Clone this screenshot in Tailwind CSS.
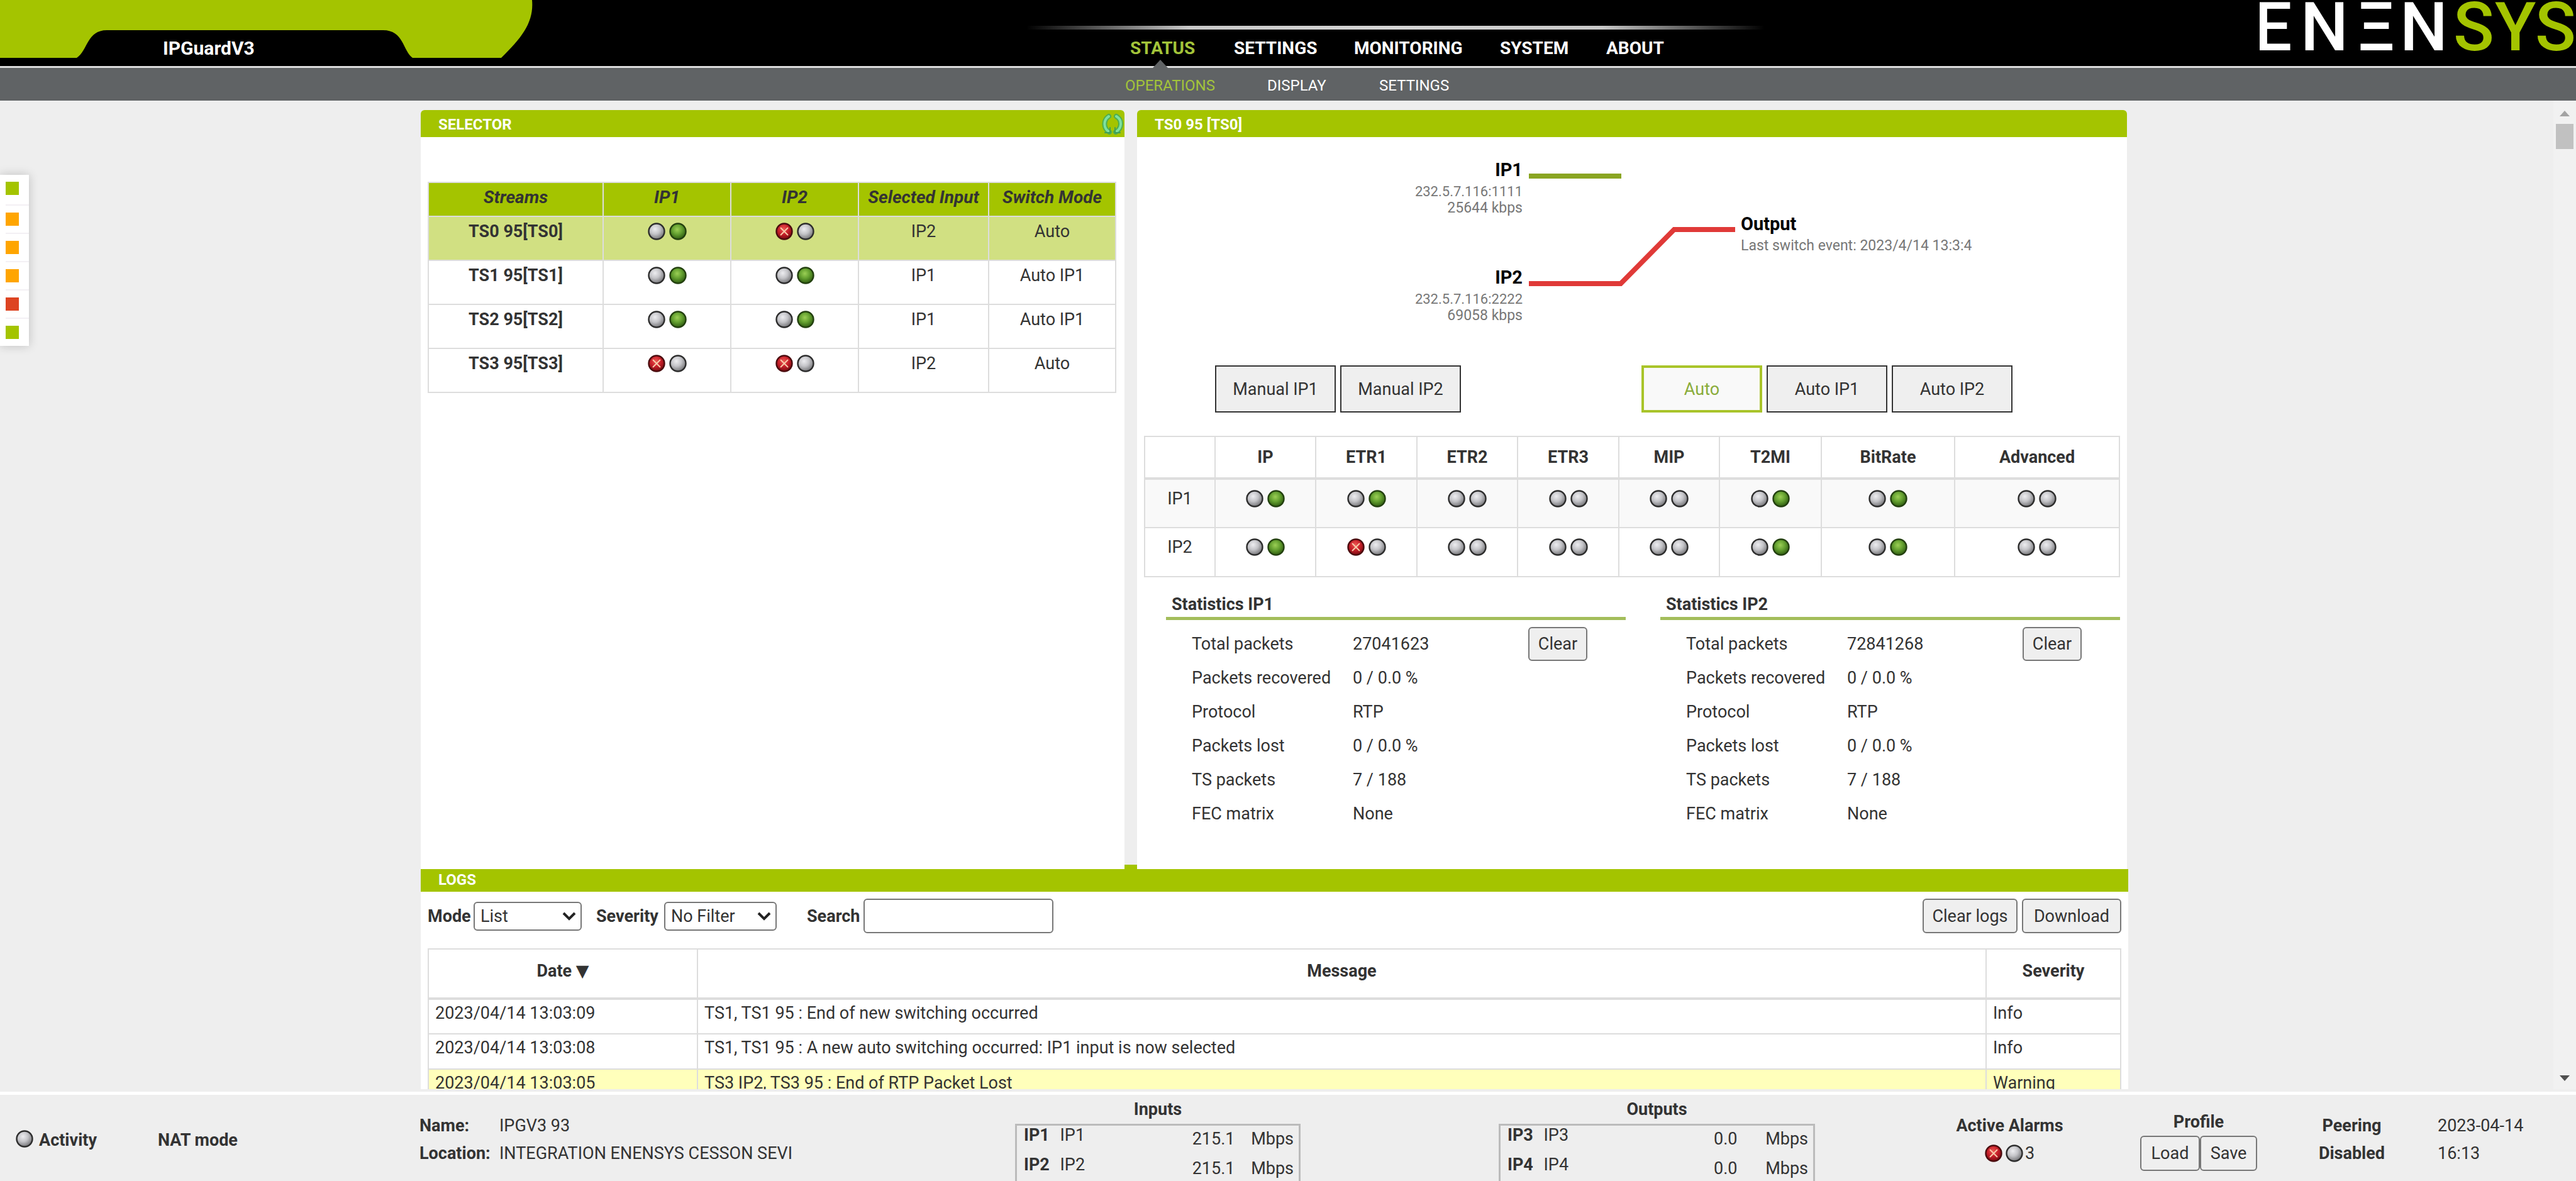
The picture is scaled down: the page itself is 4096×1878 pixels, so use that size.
<!DOCTYPE html>
<html lang="en">
<head>
    <meta charset="UTF-8">
    <meta name="viewport" content="width=device-width, initial-scale=1.0">
    <title>IPGuardV3 - Operations</title>
    <script src="https://cdn.jsdelivr.net/npm/@tailwindcss/browser@4"></script>
</head>
<body class="h-screen flex flex-col overflow-hidden bg-[#eeeeee] font-['Roboto','Liberation_Sans',sans-serif] text-[27px] leading-[36px] text-[#333333]">

    <!-- Shared lamp symbols -->
    <svg class="absolute w-0 h-0" aria-hidden="true">
        <defs>
            <radialGradient id="grayFill" cx="40%" cy="35%" r="65%">
                <stop offset="0" stop-color="#ededf0" />
                <stop offset="0.5" stop-color="#c4c4c8" />
                <stop offset="1" stop-color="#77777a" />
            </radialGradient>
            <radialGradient id="greenFill" cx="45%" cy="38%" r="62%">
                <stop offset="0" stop-color="#9bcf55" />
                <stop offset="0.5" stop-color="#64a030" />
                <stop offset="1" stop-color="#2f5c10" />
            </radialGradient>
            <radialGradient id="redFill" cx="45%" cy="35%" r="65%">
                <stop offset="0" stop-color="#ee5a55" />
                <stop offset="0.5" stop-color="#c8202a" />
                <stop offset="1" stop-color="#7a0a10" />
            </radialGradient>
            <symbol id="gray" viewBox="0 0 28 28">
                <circle cx="14" cy="14" r="12.5" fill="url(#grayFill)" stroke="#2c2c2c" stroke-width="2.4" />
            </symbol>
            <symbol id="green" viewBox="0 0 28 28">
                <circle cx="14" cy="14" r="12.5" fill="url(#greenFill)" stroke="#23400f" stroke-width="2.4" />
            </symbol>
            <symbol id="red" viewBox="0 0 28 28">
                <circle cx="14" cy="14" r="12.5" fill="url(#redFill)" stroke="#4a0b0e" stroke-width="2.4" />
                <path d="M8 8L20 20M20 8L8 20" stroke="#f7c9a8" stroke-width="2" />
            </symbol>
        </defs>
    </svg>

    <!-- Header -->
    <header class="relative h-[105px] shrink-0 bg-black flex">
        <div class="relative w-[847px] h-[92px] shrink-0">
            <svg class="absolute inset-0 w-full h-full" viewBox="0 0 847 92" aria-hidden="true">
                <path fill="#a4c400" d="M0 0H846C849 34 832 58 797 92H656C640 80 642 48 609 48H170C138 48 140 80 122 92H0Z" />
            </svg>
            <h1 class="relative pl-[259px] pt-[59px] text-[30px] font-bold text-white">IPGuardV3</h1>
        </div>
        <div class="absolute left-[1632px] top-[41px] w-[1174px] h-[6px] bg-[linear-gradient(90deg,transparent,#c8c8c8_22%,#d5d5d5_50%,#c8c8c8_78%,transparent)]"></div>
        <nav class="pl-[950px] pt-[59px] flex gap-[63px] text-[28px] font-bold text-white">
            <a href="#" class="relative w-[102px] text-[#a3c43a]">STATUS
                <svg class="absolute left-[36px] top-[36px] w-[24px] h-[13px]" viewBox="0 0 24 13" aria-hidden="true"><path d="M12 0L24 13H0Z" fill="#606365" /></svg>
            </a>
            <a href="#" class="w-[128px]">SETTINGS</a>
            <a href="#" class="w-[169px]">MONITORING</a>
            <a href="#" class="w-[106px]">SYSTEM</a>
            <a href="#">ABOUT</a>
        </nav>
        <svg class="ml-auto w-[503px] h-[105px]" viewBox="0 0 503 105" role="img" aria-label="ENENSYS">
            <text y="80" x="-9 65 155 223 308 374 438" font-family="Roboto" font-size="107" font-weight="500" fill="#ffffff">ENΞN<tspan fill="#a4c400">SYS</tspan></text>
        </svg>
    </header>
    <nav class="h-[55px] shrink-0 bg-[#606365] border-t-[3px] border-[#dddddd] pl-[1789px] pt-[10px] flex gap-[84px] text-[24px] text-white">
        <a href="#" class="w-[142px] text-[#a3c43a]">OPERATIONS</a>
        <a href="#" class="w-[94px]">DISPLAY</a>
        <a href="#">SETTINGS</a>
    </nav>

    <div class="flex-1 min-h-0 flex overflow-hidden pb-1">
        <main class="flex-1 min-w-0 overflow-hidden pl-[669px] pr-[676px] pt-[15px]">
            <div class="flex">
                <!-- Selector -->
                <section class="flex-1 bg-white rounded-t-md">
                    <div class="h-[43px] flex justify-between bg-[#a4c400] rounded-t-md pl-[28px]">
                        <h2 class="text-[24px] leading-[46px] font-bold text-white">SELECTOR</h2>
                        <button type="button" aria-label="Refresh" class="pr-[2px]">
                            <svg class="w-[34px] h-[36px]" viewBox="0 0 34 36" fill="none" stroke-linecap="round">
                                <path d="M11 6C2 12 2 25 12 31M23 6C33 12 32 25 22 31" stroke="#4fae4f" stroke-width="8" />
                                <path d="M11 6C2 12 2 25 12 31M23 6C33 12 32 25 22 31" stroke="#7fe0a0" stroke-width="4" />
                                <path d="M13 24V32H5M21 24V32H29" stroke="#3f9f55" stroke-width="2" />
                            </svg>
                        </button>
                    </div>
                    <table class="w-[1095px] ml-[11px] mt-[71px] table-fixed border-collapse text-center [&_td]:border-2 [&_td]:border-[#dddddd] [&_td]:pt-[5px] [&_td]:align-top [&_th]:border-2 [&_th]:border-[#dddddd] [&_tr]:h-[70px]">
                        <colgroup><col class="w-[278px]"><col class="w-[203px]"><col class="w-[203px]"><col class="w-[207px]"><col></colgroup>
                        <thead class="bg-[#a4c400] italic text-[28px]">
                            <tr class="!h-[54px]">
                                <th class="pb-[6px]">Streams</th><th class="pb-[6px]">IP1</th><th class="pb-[6px]">IP2</th><th class="pb-[6px]">Selected Input</th><th class="pb-[6px]">Switch Mode</th>
                            </tr>
                        </thead>
                        <tbody>
                            <tr class="bg-[#d1e082]">
                                <td class="font-bold">TS0 95[TS0]</td>
                                <td><div class="flex justify-center gap-[6px] pt-1"><svg class="size-[28px]"><use href="#gray" /></svg><svg class="size-[28px]"><use href="#green" /></svg></div></td>
                                <td><div class="flex justify-center gap-[6px] pt-1"><svg class="size-[28px]"><use href="#red" /></svg><svg class="size-[28px]"><use href="#gray" /></svg></div></td>
                                <td>IP2</td>
                                <td>Auto</td>
                            </tr>
                            <tr>
                                <td class="font-bold">TS1 95[TS1]</td>
                                <td><div class="flex justify-center gap-[6px] pt-1"><svg class="size-[28px]"><use href="#gray" /></svg><svg class="size-[28px]"><use href="#green" /></svg></div></td>
                                <td><div class="flex justify-center gap-[6px] pt-1"><svg class="size-[28px]"><use href="#gray" /></svg><svg class="size-[28px]"><use href="#green" /></svg></div></td>
                                <td>IP1</td>
                                <td>Auto IP1</td>
                            </tr>
                            <tr>
                                <td class="font-bold">TS2 95[TS2]</td>
                                <td><div class="flex justify-center gap-[6px] pt-1"><svg class="size-[28px]"><use href="#gray" /></svg><svg class="size-[28px]"><use href="#green" /></svg></div></td>
                                <td><div class="flex justify-center gap-[6px] pt-1"><svg class="size-[28px]"><use href="#gray" /></svg><svg class="size-[28px]"><use href="#green" /></svg></div></td>
                                <td>IP1</td>
                                <td>Auto IP1</td>
                            </tr>
                            <tr>
                                <td class="font-bold">TS3 95[TS3]</td>
                                <td><div class="flex justify-center gap-[6px] pt-1"><svg class="size-[28px]"><use href="#red" /></svg><svg class="size-[28px]"><use href="#gray" /></svg></div></td>
                                <td><div class="flex justify-center gap-[6px] pt-1"><svg class="size-[28px]"><use href="#red" /></svg><svg class="size-[28px]"><use href="#gray" /></svg></div></td>
                                <td>IP2</td>
                                <td>Auto</td>
                            </tr>
                        </tbody>
                    </table>
                </section>

                <div class="w-[20px] h-[7px] self-end bg-[#a4c400]"></div>

                <!-- Stream detail -->
                <section class="w-[1574px] mr-[2px] bg-white rounded-t-md pb-[61px]">
                    <h2 class="h-[43px] bg-[#a4c400] rounded-t-md pl-[28px] text-[24px] leading-[46px] font-bold text-white">TS0 95 [TS0]</h2>

                    <svg class="block w-full h-[363px]" viewBox="0 0 1574 363" fill="none" font-size="23">
                        <path d="M623 62H770" stroke="#8aa522" stroke-width="8" />
                        <path d="M623 233H769L854 147H951" stroke="#e03a38" stroke-width="8" />
                        <g font-size="29" font-weight="bold" fill="#000000">
                            <text x="613" y="62" text-anchor="end">IP1</text>
                            <text x="613" y="233" text-anchor="end">IP2</text>
                            <text x="960" y="148">Output</text>
                        </g>
                        <g fill="#777777">
                            <text x="613" y="94" text-anchor="end" font-size="22">232.5.7.116:1111</text>
                            <text x="613" y="120" text-anchor="end">25644 kbps</text>
                            <text x="613" y="265" text-anchor="end" font-size="22">232.5.7.116:2222</text>
                            <text x="613" y="291" text-anchor="end">69058 kbps</text>
                            <text x="960" y="180">Last switch event: 2023/4/14 13:3:4</text>
                        </g>
                    </svg>

                    <div class="flex justify-between pl-[124px] pr-[182px]">
                        <div class="flex gap-[7px]">
                            <button type="button" class="w-[192px] h-[75px] border-2 border-[#333333] bg-[#efefef]">Manual IP1</button>
                            <button type="button" class="w-[192px] h-[75px] border-2 border-[#333333] bg-[#efefef]">Manual IP2</button>
                        </div>
                        <div class="flex gap-[7px]">
                            <button type="button" class="w-[192px] h-[75px] border-4 border-[#a9c42a] bg-[#f9f9f9] text-[#8aac3b]">Auto</button>
                            <button type="button" class="w-[192px] h-[75px] border-2 border-[#333333] bg-[#efefef]">Auto IP1</button>
                            <button type="button" class="w-[192px] h-[75px] border-2 border-[#333333] bg-[#efefef]">Auto IP2</button>
                        </div>
                    </div>

                    <table class="w-[1552px] mx-auto mt-[37px] table-fixed border-collapse text-center [&_td]:border-2 [&_td]:border-[#dddddd] [&_td]:pt-[12px] [&_td]:align-top [&_th]:border-2 [&_th]:border-b-4 [&_th]:border-[#dddddd] [&_tr]:h-[78px]">
                        <colgroup><col class="w-[112px]"><col class="w-[160px]"><col class="w-[161px]"><col class="w-[160px]"><col class="w-[161px]"><col class="w-[160px]"><col class="w-[162px]"><col class="w-[212px]"><col></colgroup>
                        <thead>
                            <tr class="!h-[67px]">
                                <th></th><th>IP</th><th>ETR1</th><th>ETR2</th><th>ETR3</th><th>MIP</th><th>T2MI</th><th>BitRate</th><th>Advanced</th>
                            </tr>
                        </thead>
                        <tbody>
                            <tr class="bg-[#f9f9f9]">
                                <td>IP1</td>
                                <td><div class="flex justify-center gap-[6px] pt-1"><svg class="size-[28px]"><use href="#gray" /></svg><svg class="size-[28px]"><use href="#green" /></svg></div></td>
                                <td><div class="flex justify-center gap-[6px] pt-1"><svg class="size-[28px]"><use href="#gray" /></svg><svg class="size-[28px]"><use href="#green" /></svg></div></td>
                                <td><div class="flex justify-center gap-[6px] pt-1"><svg class="size-[28px]"><use href="#gray" /></svg><svg class="size-[28px]"><use href="#gray" /></svg></div></td>
                                <td><div class="flex justify-center gap-[6px] pt-1"><svg class="size-[28px]"><use href="#gray" /></svg><svg class="size-[28px]"><use href="#gray" /></svg></div></td>
                                <td><div class="flex justify-center gap-[6px] pt-1"><svg class="size-[28px]"><use href="#gray" /></svg><svg class="size-[28px]"><use href="#gray" /></svg></div></td>
                                <td><div class="flex justify-center gap-[6px] pt-1"><svg class="size-[28px]"><use href="#gray" /></svg><svg class="size-[28px]"><use href="#green" /></svg></div></td>
                                <td><div class="flex justify-center gap-[6px] pt-1"><svg class="size-[28px]"><use href="#gray" /></svg><svg class="size-[28px]"><use href="#green" /></svg></div></td>
                                <td><div class="flex justify-center gap-[6px] pt-1"><svg class="size-[28px]"><use href="#gray" /></svg><svg class="size-[28px]"><use href="#gray" /></svg></div></td>
                            </tr>
                            <tr>
                                <td>IP2</td>
                                <td><div class="flex justify-center gap-[6px] pt-1"><svg class="size-[28px]"><use href="#gray" /></svg><svg class="size-[28px]"><use href="#green" /></svg></div></td>
                                <td><div class="flex justify-center gap-[6px] pt-1"><svg class="size-[28px]"><use href="#red" /></svg><svg class="size-[28px]"><use href="#gray" /></svg></div></td>
                                <td><div class="flex justify-center gap-[6px] pt-1"><svg class="size-[28px]"><use href="#gray" /></svg><svg class="size-[28px]"><use href="#gray" /></svg></div></td>
                                <td><div class="flex justify-center gap-[6px] pt-1"><svg class="size-[28px]"><use href="#gray" /></svg><svg class="size-[28px]"><use href="#gray" /></svg></div></td>
                                <td><div class="flex justify-center gap-[6px] pt-1"><svg class="size-[28px]"><use href="#gray" /></svg><svg class="size-[28px]"><use href="#gray" /></svg></div></td>
                                <td><div class="flex justify-center gap-[6px] pt-1"><svg class="size-[28px]"><use href="#gray" /></svg><svg class="size-[28px]"><use href="#green" /></svg></div></td>
                                <td><div class="flex justify-center gap-[6px] pt-1"><svg class="size-[28px]"><use href="#gray" /></svg><svg class="size-[28px]"><use href="#green" /></svg></div></td>
                                <td><div class="flex justify-center gap-[6px] pt-1"><svg class="size-[28px]"><use href="#gray" /></svg><svg class="size-[28px]"><use href="#gray" /></svg></div></td>
                            </tr>
                        </tbody>
                    </table>

                    <div class="flex gap-[55px] pl-[46px] pr-[11px] pt-[22px]">
                        <div class="flex-1">
                            <h3 class="h-[46px] pl-[9px] leading-[42px] font-bold border-b-[5px] border-[#a3bd5b]">Statistics IP1</h3>
                            <table class="w-full mt-[11px] table-fixed [&_tr]:h-[54px] [&_td]:h-[54px]">
                                <colgroup><col class="w-[297px]"><col class="w-[279px]"><col></colgroup>
                                <tr><td class="pl-[41px]">Total packets</td><td>27041623</td><td><button type="button" class="block w-[94px] h-[54px] border-2 border-[#777777] rounded-md bg-[#efefef]">Clear</button></td></tr>
                                <tr><td class="pl-[41px] whitespace-nowrap">Packets recovered</td><td>0 / 0.0 %</td><td></td></tr>
                                <tr><td class="pl-[41px]">Protocol</td><td>RTP</td><td></td></tr>
                                <tr><td class="pl-[41px]">Packets lost</td><td>0 / 0.0 %</td><td></td></tr>
                                <tr><td class="pl-[41px]">TS packets</td><td>7 / 188</td><td></td></tr>
                                <tr><td class="pl-[41px]">FEC matrix</td><td>None</td><td></td></tr>
                            </table>
                        </div>
                        <div class="flex-1">
                            <h3 class="h-[46px] pl-[9px] leading-[42px] font-bold border-b-[5px] border-[#a3bd5b]">Statistics IP2</h3>
                            <table class="w-full mt-[11px] table-fixed [&_tr]:h-[54px] [&_td]:h-[54px]">
                                <colgroup><col class="w-[297px]"><col class="w-[279px]"><col></colgroup>
                                <tr><td class="pl-[41px]">Total packets</td><td>72841268</td><td><button type="button" class="block w-[94px] h-[54px] border-2 border-[#777777] rounded-md bg-[#efefef]">Clear</button></td></tr>
                                <tr><td class="pl-[41px] whitespace-nowrap">Packets recovered</td><td>0 / 0.0 %</td><td></td></tr>
                                <tr><td class="pl-[41px]">Protocol</td><td>RTP</td><td></td></tr>
                                <tr><td class="pl-[41px]">Packets lost</td><td>0 / 0.0 %</td><td></td></tr>
                                <tr><td class="pl-[41px]">TS packets</td><td>7 / 188</td><td></td></tr>
                                <tr><td class="pl-[41px]">FEC matrix</td><td>None</td><td></td></tr>
                            </table>
                        </div>
                    </div>
                </section>
            </div>

            <!-- Logs -->
            <section class="bg-white">
                <h2 class="h-[36px] bg-[#a4c400] pl-[28px] text-[24px] leading-[34px] font-bold text-white">LOGS</h2>
                <div class="h-[90px] pt-[11px] px-[11px] flex items-start">
                    <div class="h-[55px] flex items-center">
                        <label for="mode" class="w-[73px] font-bold">Mode</label>
                        <div class="relative">
                            <select id="mode" class="block w-[172px] h-[46px] appearance-none border-2 border-[#777777] rounded-md bg-white pl-[9px]">
                                <option>List</option>
                            </select>
                            <svg class="absolute right-[9px] top-[16px] w-[22px] h-[14px]" viewBox="0 0 22 14" fill="none" stroke="#222222" stroke-width="4" aria-hidden="true"><path d="M2 2L11 11L20 2" /></svg>
                        </div>
                        <label for="severity" class="ml-[23px] w-[108px] font-bold">Severity</label>
                        <div class="relative">
                            <select id="severity" class="block w-[179px] h-[46px] appearance-none border-2 border-[#777777] rounded-md bg-white pl-[9px]">
                                <option>No Filter</option>
                            </select>
                            <svg class="absolute right-[9px] top-[16px] w-[22px] h-[14px]" viewBox="0 0 22 14" fill="none" stroke="#222222" stroke-width="4" aria-hidden="true"><path d="M2 2L11 11L20 2" /></svg>
                        </div>
                        <label for="search" class="ml-[48px] w-[90px] font-bold">Search</label>
                        <input id="search" type="text" class="w-[302px] h-[55px] border-2 border-[#777777] rounded-md bg-white px-2">
                    </div>
                    <div class="ml-auto flex gap-[7px]">
                        <button type="button" class="w-[151px] h-[55px] border-2 border-[#777777] rounded-md bg-[#efefef]">Clear logs</button>
                        <button type="button" class="w-[158px] h-[55px] border-2 border-[#777777] rounded-md bg-[#efefef]">Download</button>
                    </div>
                </div>
                <div class="px-[11px]">
                    <table class="w-full table-fixed border-collapse [&_td]:border-2 [&_td]:border-[#dddddd] [&_td]:pl-[10px] [&_td]:pb-[12px] [&_th]:border-2 [&_th]:border-b-4 [&_th]:border-[#dddddd] [&_th]:pb-[8px] [&_tr]:h-[56px]">
                        <colgroup><col class="w-[428px]"><col><col class="w-[214px]"></colgroup>
                        <thead>
                            <tr class="!h-[79px]"><th>Date <span class="font-['DejaVu_Sans']">▼</span></th><th>Message</th><th>Severity</th></tr>
                        </thead>
                        <tbody>
                            <tr><td>2023/04/14 13:03:09</td><td>TS1, TS1 95 : End of new switching occurred</td><td>Info</td></tr>
                            <tr><td>2023/04/14 13:03:08</td><td>TS1, TS1 95 : A new auto switching occurred: IP1 input is now selected</td><td>Info</td></tr>
                            <tr class="bg-[#ffffbb]"><td>2023/04/14 13:03:05</td><td>TS3 IP2, TS3 95 : End of RTP Packet Lost</td><td>Warning</td></tr>
                        </tbody>
                    </table>
                </div>
            </section>
        </main>

        <!-- Scrollbar -->
        <div class="w-[36px] shrink-0 bg-[#f1f1f1] flex flex-col items-center pt-[16px] pb-[13px]">
            <svg class="w-[16px] h-[9px]" viewBox="0 0 16 9" aria-hidden="true"><path d="M8 0L16 9H0Z" fill="#a3a3a3" /></svg>
            <div class="w-[28px] h-[40px] mt-[12px] bg-[#c1c1c1]"></div>
            <svg class="w-[16px] h-[9px] mt-auto" viewBox="0 0 16 9" aria-hidden="true"><path d="M8 9L16 0H0Z" fill="#505050" /></svg>
        </div>
    </div>

    <!-- Status tabs on the left edge -->
    <aside class="absolute left-0 top-[278px] w-[46px] bg-white shadow-[0_0_16px_rgba(0,0,0,0.2)] pl-[9px] divide-y-2 divide-[#f3f0f4]">
        <div class="h-[49px] pt-[11px]"><div class="size-[21px] bg-[#a4c400]"></div></div>
        <div class="h-[45px] pt-[11px]"><div class="size-[21px] bg-[#ffa500]"></div></div>
        <div class="h-[45px] pt-[11px]"><div class="size-[21px] bg-[#ffa500]"></div></div>
        <div class="h-[45px] pt-[11px]"><div class="size-[21px] bg-[#ffa500]"></div></div>
        <div class="h-[45px] pt-[11px]"><div class="size-[21px] bg-[#dd4422]"></div></div>
        <div class="h-[43px] pt-[11px]"><div class="size-[21px] bg-[#a4c400]"></div></div>
    </aside>

    <!-- Footer -->
    <footer class="h-[142px] shrink-0 overflow-hidden border-t-[5px] border-white pl-[25px] grid grid-cols-[226fr_416fr_947fr_454fr_315fr_503fr_222fr_175fr_120fr_186fr_97fr_107fr_83fr_220fr]">
        <div class="pt-[54px] flex items-start gap-[9px] font-bold"><svg class="size-[28px] mt-[2px]"><use href="#gray" /></svg>Activity</div>
        <div class="pt-[54px] font-bold">NAT mode</div>
        <div class="pt-[27px] leading-[44px] grid grid-cols-[127px_1fr] content-start">
            <b>Name:</b><span>IPGV3 93</span>
            <b>Location:</b><span>INTEGRATION ENENSYS CESSON SEVI</span>
        </div>
        <div>
            <div class="h-[46px] pt-[5px] text-center font-bold">Inputs</div>
            <table class="w-full border-[3px] border-[#bbbbbb] leading-[30px] [&_tr]:h-[48px] [&_td]:align-top">
                <tr><th class="w-[70px] pl-[11px] text-left align-top">IP1</th><td>IP1</td><td class="pt-[6px] text-right">215.1</td><td class="w-[103px] pt-[6px] pr-[8px] text-right">Mbps</td></tr>
                <tr><th class="pl-[11px] text-left align-top">IP2</th><td>IP2</td><td class="pt-[6px] text-right">215.1</td><td class="pt-[6px] pr-[8px] text-right">Mbps</td></tr>
            </table>
        </div>
        <div class="col-start-6">
            <div class="h-[46px] pt-[5px] text-center font-bold">Outputs</div>
            <table class="w-full border-[3px] border-[#bbbbbb] leading-[30px] [&_tr]:h-[48px] [&_td]:align-top">
                <tr><th class="w-[70px] pl-[11px] text-left align-top">IP3</th><td>IP3</td><td class="pt-[6px] text-right">0.0</td><td class="w-[122px] pt-[6px] pr-[8px] text-right">Mbps</td></tr>
                <tr><th class="pl-[11px] text-left align-top">IP4</th><td>IP4</td><td class="pt-[6px] text-right">0.0</td><td class="pt-[6px] pr-[8px] text-right">Mbps</td></tr>
            </table>
        </div>
        <div class="col-start-8 pt-[27px] leading-[44px] text-center">
            <b class="whitespace-nowrap">Active Alarms</b>
            <div class="flex justify-center items-center"><svg class="size-[28px] mr-[5px]"><use href="#red" /></svg><svg class="size-[28px] mr-[3px]"><use href="#gray" /></svg>3</div>
        </div>
        <div class="col-start-10 pt-[25px] text-center">
            <b>Profile</b>
            <div class="flex mt-1">
                <button type="button" class="w-[95px] h-[56px] border-2 border-[#777777] rounded-md bg-[#efefef]">Load</button>
                <button type="button" class="w-[91px] h-[56px] border-2 border-[#777777] rounded-md bg-[#efefef]">Save</button>
            </div>
        </div>
        <div class="col-start-12 pt-[27px] leading-[44px] text-center font-bold">Peering<br>Disabled</div>
        <div class="col-start-14 pt-[27px] leading-[44px]">2023-04-14<br>16:13</div>
    </footer>
</body>
</html>
